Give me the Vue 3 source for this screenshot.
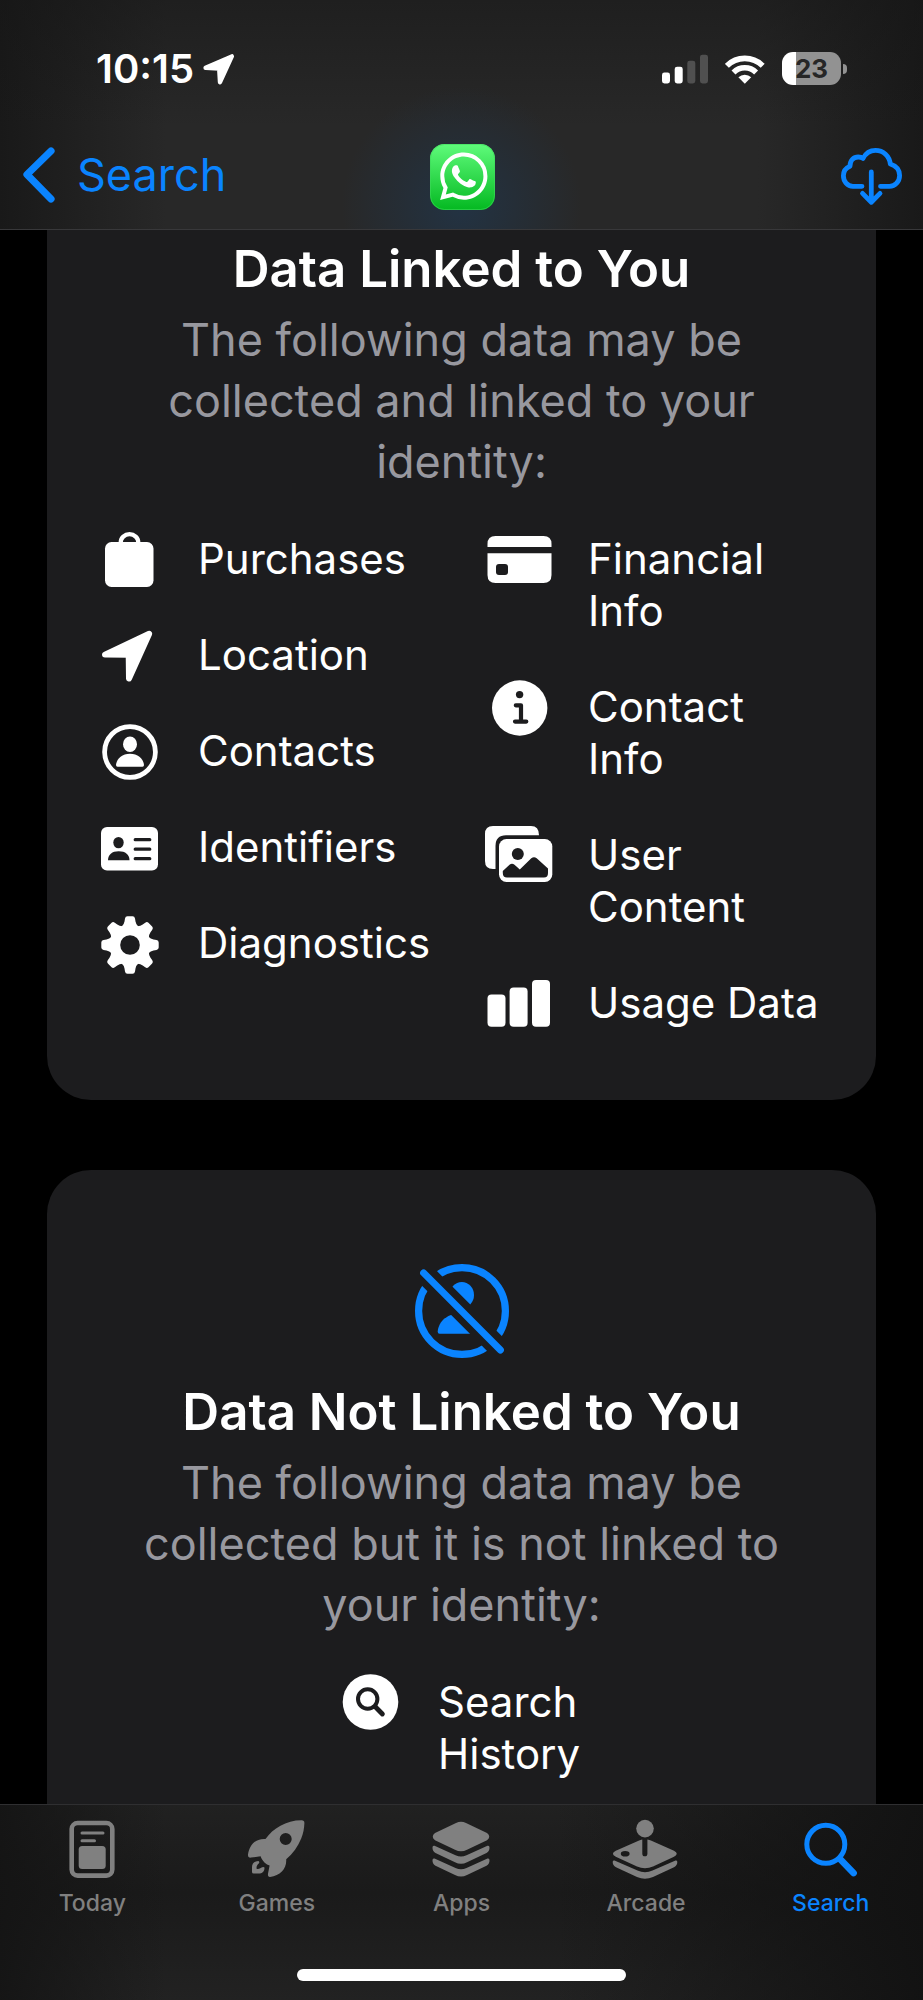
<script setup>
const linkedColumns = [
  [
    { icon: 'bag', label: 'Purchases' },
    { icon: 'location', label: 'Location' },
    { icon: 'contacts', label: 'Contacts' },
    { icon: 'id', label: 'Identifiers' },
    { icon: 'gear', label: 'Diagnostics' },
  ],
  [
    { icon: 'card', label: 'Financial Info' },
    { icon: 'info', label: 'Contact Info' },
    { icon: 'photos', label: 'User Content' },
    { icon: 'bars', label: 'Usage Data' },
  ],
]

const tabs = ['Today', 'Games', 'Apps', 'Arcade', 'Search']
const teeth = [0, 45, 90, 135, 180, 225, 270, 315]
</script>

<template>
  <div class="screen">
    <header class="top">
      <div class="status">
        <div class="clock">
          <span>10:15</span>
          <svg width="32" height="32" viewBox="0 0 32 32" aria-hidden="true">
            <path d="M2.6 14.8 28.8 3.4 17 29.2 16.2 15.6Z" fill="#fff" stroke="#fff" stroke-width="4.4" stroke-linejoin="round" />
          </svg>
        </div>
        <div class="indicators">
          <svg width="46" height="30" viewBox="0 0 46 30" aria-hidden="true">
            <rect x="0" y="18.500" width="8" height="11" rx="2.400" fill="#fff" />
            <rect x="12.700" y="12.700" width="8" height="16.800" rx="2.400" fill="#fff" />
            <rect x="25.300" y="6.700" width="8" height="22.800" rx="2.400" fill="#505050" />
            <rect x="38" y="0.700" width="8" height="28.800" rx="2.400" fill="#505050" />
          </svg>
          <svg width="40" height="30" viewBox="0 0 40 30" aria-hidden="true">
            <path d="M1.9 11.8A25.3 25.3 0 0 1 37.7 11.8M8.5 18.4A16 16 0 0 1 31.1 18.4" fill="none" stroke="#fff" stroke-width="5.600" />
            <path d="M19.8 29.7 13.4 23.3A9 9 0 0 1 26.200 23.300Z" fill="#fff" />
          </svg>
          <div class="battery"><span class="level">23</span><i class="nub"></i></div>
        </div>
      </div>
      <nav class="nav">
        <a class="back" href="#search">
          <svg width="32" height="56" viewBox="0 0 32 56" aria-hidden="true">
            <path d="M28 4 4 27.500 28 52" fill="none" stroke="#0a84ff" stroke-width="7.200" stroke-linecap="round" stroke-linejoin="round" />
          </svg>
          <span>Search</span>
        </a>
        <svg class="logo" width="65" height="66" viewBox="0 0 65 66" role="img" aria-label="WhatsApp">
          <defs>
            <linearGradient id="wa" x1="0" y1="0" x2="0" y2="1">
              <stop offset="0" stop-color="#5ffb7b" />
              <stop offset="1" stop-color="#04b921" />
            </linearGradient>
          </defs>
          <rect width="65" height="66" rx="14.500" fill="url(#wa)" />
          <rect x="0.500" y="0.500" width="64" height="65" rx="14" fill="none" stroke="#3fd95b" stroke-opacity="0.600" />
          <path fill="#fff" transform="translate(10 8.600) scale(1.980)" d="M17.472 14.382c-.297-.149-1.758-.867-2.03-.967-.273-.099-.471-.148-.67.15-.197.297-.767.966-.94 1.164-.173.199-.347.223-.644.075-.297-.15-1.255-.463-2.39-1.475-.883-.788-1.48-1.761-1.653-2.059-.173-.297-.018-.458.13-.606.134-.133.298-.347.446-.52.149-.174.198-.298.298-.497.099-.198.05-.371-.025-.52-.075-.149-.669-1.612-.916-2.207-.242-.579-.487-.5-.669-.51-.173-.008-.371-.01-.57-.01-.198 0-.52.074-.792.372-.272.297-1.04 1.016-1.04 2.479 0 1.462 1.065 2.875 1.213 3.074.149.198 2.096 3.2 5.077 4.487.709.306 1.262.489 1.694.625.712.227 1.36.195 1.871.118.571-.085 1.758-.719 2.006-1.413.248-.694.248-1.289.173-1.413-.074-.124-.272-.198-.57-.347m-5.421 7.403h-.004a9.87 9.87 0 01-5.031-1.378l-.361-.214-3.741.982.998-3.648-.235-.374a9.86 9.86 0 01-1.51-5.26c.001-5.45 4.436-9.884 9.888-9.884 2.64 0 5.122 1.03 6.988 2.898a9.825 9.825 0 012.893 6.994c-.003 5.45-4.437 9.884-9.885 9.884m8.413-18.297A11.815 11.815 0 0012.05 0C5.495 0 .16 5.335.157 11.892c0 2.096.547 4.142 1.588 5.945L.057 24l6.305-1.654a11.882 11.882 0 005.683 1.448h.005c6.554 0 11.89-5.335 11.893-11.893a11.821 11.821 0 00-3.48-8.413z" />
        </svg>
        <button class="download" type="button" aria-label="Download">
          <svg width="61" height="58" viewBox="0 0 61 58" aria-hidden="true">
            <g fill="none" stroke="#0a84ff" stroke-width="4.800" stroke-linecap="round" stroke-linejoin="round">
              <path d="M21 38.300H12C6.300 38.300 2.400 33.200 2.400 27.800 2.400 23.400 5 19.800 9 18.200 9 12.500 12.500 9 17.300 9 19.200 9 20.800 9.500 22 10.500 24.500 5.600 29 2.400 34.500 2.400 42.300 2.400 48.500 8 49.300 16 55 17.800 58.600 22 58.600 27.500 58.600 33.500 54.200 38.300 48.500 38.300H39.500" />
              <path d="M30.300 24V54M21.500 45.400 30.300 54.200 39 45.400" />
            </g>
          </svg>
        </button>
      </nav>
    </header>

    <main class="content">
      <section class="card linked">
        <h2>Data Linked to You</h2>
        <p>The following data may be collected and linked to your identity:</p>
        <div class="columns">
          <ul v-for="(column, c) in linkedColumns" :key="c">
            <li v-for="item in column" :key="item.label">
              <svg class="glyph" viewBox="0 0 68 52" aria-hidden="true">
                <g v-if="item.icon === 'bag'">
                  <rect x="9" y="9" width="48.500" height="45" rx="6.500" fill="#fff" />
                  <path d="M24.700 10.500V9.500A8.800 8.300 0 0 1 42.300 9.500V10.500" fill="none" stroke="#fff" stroke-width="4.200" />
                </g>
                <path v-else-if="item.icon === 'location'" d="M9 25.600 53.200 4.800 33 49.500 32.700 25.700Z" fill="#fff" stroke="#fff" stroke-width="6" stroke-linejoin="round" />
                <g v-else-if="item.icon === 'contacts'" fill="#fff">
                  <circle cx="34" cy="27" r="25.400" fill="none" stroke="#fff" stroke-width="4.800" />
                  <ellipse cx="34" cy="19.200" rx="7" ry="7.700" />
                  <path d="M21.500 41.700Q20 41.700 20 40C20.500 34 26 28.800 34 28.800S47.500 34 48 40Q48 41.700 46.500 41.700Z" />
                </g>
                <g v-else-if="item.icon === 'id'" fill="#1c1c1e">
                  <rect x="5" y="6" width="57" height="43.500" rx="6" fill="#fff" />
                  <ellipse cx="22.500" cy="21.600" rx="5.200" ry="5.700" />
                  <path d="M12 39.300C12 33.500 16 30.200 22.700 30.200S33.500 33.500 33.500 39.300Z" />
                  <path d="M39.200 18.700H53.800M39.200 28.200H53.800M39.200 37.700H53.800" stroke="#1c1c1e" stroke-width="3.200" stroke-linecap="round" />
                </g>
                <g v-else-if="item.icon === 'gear'" fill="#fff">
                  <circle cx="34" cy="28" r="20.500" />
                  <path v-for="angle in teeth" :key="angle" :transform="`rotate(${angle} 34 28)`" d="M25.800 9.500Q28 7.500 28.500 4.500L29 1.500Q29.400-.7 31.400-.7H36.600Q38.600-.7 39 1.500L39.500 4.500Q40 7.500 42.200 9.500Z" />
                  <circle cx="34" cy="28" r="9.800" fill="#1c1c1e" />
                </g>
                <g v-else-if="item.icon === 'card'" fill="#fff">
                  <path d="M1.500 14V11Q1.500 3 9.500 3H57.500Q65.500 3 65.500 11V14Z" />
                  <path d="M1.500 20.300H65.500V42Q65.500 50 57.500 50H9.500Q1.500 50 1.500 42Z" />
                  <rect x="10" y="31" width="12" height="11" rx="3" fill="#1c1c1e" />
                </g>
                <g v-else-if="item.icon === 'info'">
                  <circle cx="33.700" cy="27" r="27.700" fill="#fff" />
                  <circle cx="33.600" cy="13.600" r="3.700" fill="#1c1c1e" />
                  <path d="M29.800 24.300H35V40.600M29 40.600H40.300" fill="none" stroke="#1c1c1e" stroke-width="4.200" stroke-linecap="round" stroke-linejoin="round" />
                </g>
                <g v-else-if="item.icon === 'photos'" fill="#fff">
                  <path d="M9.500 40H7Q-1 40-1 32V5Q-1-3 7-3H45Q53-3 53 6.300H20Q9.500 6.300 9.500 17Z" />
                  <rect x="13" y="10" width="53.300" height="43" rx="7.500" />
                  <circle cx="31.800" cy="25" r="6" fill="#1c1c1e" />
                  <path d="M16.800 42 23.500 35.800Q26 33.800 28.500 35.800L33.800 40.600 45.300 29.300Q48 27 50.700 29.300L62 39.500V44Q62 48.600 58 48.600H21Q16.800 48.600 16.800 44Z" fill="#1c1c1e" />
                </g>
                <g v-else fill="#fff">
                  <rect x="1.500" y="17.500" width="18" height="32.200" rx="4" />
                  <rect x="23.600" y="10.600" width="18" height="39.100" rx="4" />
                  <rect x="46" y="3" width="18" height="46.700" rx="4" />
                </g>
              </svg>
              <span>{{ item.label }}</span>
            </li>
          </ul>
        </div>
      </section>

      <section class="card unlinked">
        <svg class="hero" width="94" height="94" viewBox="0 0 94 94" aria-hidden="true">
          <mask id="cut">
            <rect width="94" height="94" fill="#fff" />
            <path d="M-5-5 99 99" stroke="#000" stroke-width="21" />
          </mask>
          <g mask="url(#cut)" fill="#0a84ff">
            <circle cx="47" cy="47" r="43.400" fill="none" stroke="#0a84ff" stroke-width="7.200" />
            <ellipse cx="46.800" cy="31" rx="12.200" ry="13" />
            <path d="M24.500 69.700Q22.700 69.700 22.700 67.500C23.500 57 33 49 47 49S70.500 57 71.300 67.500Q71.300 69.700 69.500 69.700Z" />
          </g>
          <path d="M8.600 8.900 85.400 86" stroke="#0a84ff" stroke-width="7" stroke-linecap="round" />
        </svg>
        <h2>Data Not Linked to You</h2>
        <p>The following data may be collected but it is not linked to your identity:</p>
        <ul class="single">
          <li>
            <svg class="glyph" viewBox="0 0 68 52" aria-hidden="true">
              <circle cx="34.500" cy="26" r="27.800" fill="#fff" />
              <g fill="none" stroke="#1c1c1e" stroke-linecap="round">
                <circle cx="31.700" cy="23" r="9.700" stroke-width="4" />
                <path d="M39.500 31 46.400 38" stroke-width="4.800" />
              </g>
            </svg>
            <span>Search History</span>
          </li>
        </ul>
      </section>
    </main>

    <footer class="bottom">
      <nav class="tabs">
        <a v-for="tab in tabs" :key="tab" :href="`#${tab.toLowerCase()}`" :class="{ active: tab === 'Search' }">
          <svg width="68" height="60" viewBox="0 0 68 60" fill="currentColor" aria-hidden="true">
            <g v-if="tab === 'Today'">
              <rect x="13.700" y="4" width="40.600" height="52.600" rx="6" fill="none" stroke="currentColor" stroke-width="4.600" />
              <path d="M24 14H45M24 21.700H36.500" stroke="currentColor" stroke-width="3" stroke-linecap="round" />
              <rect x="20.700" y="27" width="27" height="23" rx="3.500" />
            </g>
            <g v-else-if="tab === 'Games'">
              <path fill-rule="evenodd" d="M58.500 1.300Q61.400 1.200 61.400 4C61.200 9.500 60.300 14.500 58.200 19.500 55 27.500 50 34.500 43.200 40.200 43.800 49.500 37.500 56.500 27 58 25 58 24.800 56 25 54.700L26.600 46.500C23.500 46 19 42 17.600 37.300L8 38.600C6 38.800 4.800 38 5 35.500 6.500 26 12.500 19.300 22.500 20 30 9.500 43 1.300 58.500 1.300ZM42.700 13.900A6 6 0 1 0 42.700 25.900 6 6 0 1 0 42.700 13.900Z" />
              <path d="M15.300 41.900C11 42.500 9 44.500 9 48V53Q9 54.600 10.700 54.600H15.500C19.500 54.600 21.600 52.500 21.500 48.500Q20.300 47.300 18.600 48.600 16 50.500 13.600 49.700C13.300 47.500 14 46 16 44.200Q16.800 42.500 15.300 41.900Z" />
            </g>
            <g v-else-if="tab === 'Apps'">
              <path d="M29 4Q34 1.500 39 4L60 14Q64.500 17.700 60 21.300L40 30.700Q34 33.700 28 30.700L8 21.300Q3.500 17.700 8 14Z" />
              <path d="M7.500 26.800 28.500 36.200Q34 38.800 39.500 36.200L60.500 26.800Q62.500 26.200 62.500 28.500 62.600 32.300 59.500 33.900L40 43.200Q34 46.300 28 43.200L8.500 33.900Q5.400 32.300 5.500 28.500 5.500 26.200 7.500 26.800Z" />
              <path d="M7.500 39.600 28.500 49Q34 51.600 39.500 49L60.500 39.600Q62.500 39 62.500 41.300 62.600 45.100 59.500 46.700L40 56Q34 59.100 28 56L8.500 46.700Q5.400 45.100 5.500 41.300 5.500 39 7.500 39.600Z" />
            </g>
            <g v-else-if="tab === 'Arcade'">
              <circle cx="33" cy="9.600" r="8.800" />
              <path fill-rule="evenodd" d="M30.300 20.600V34.800A2.500 2.500 0 0 0 35.400 34.800V20.600Q37.500 20.800 39.500 21.700L62 31.800Q67.500 34.500 62 37.800L41 47.500Q33 51 25 47.500L3.800 37.800Q-2 34.500 3.800 31.800L26.500 21.700Q28.500 20.800 30.300 20.600ZM13.200 31.900A4.400 2.800 0 1 0 13.200 37.500 4.400 2.800 0 1 0 13.200 31.900Z" />
              <path d="M2.500 41.600 25.500 51.600Q33 54.700 40.500 51.600L63.500 41.600Q65.300 41 65.300 43 65.300 46.500 62 48.200L41 58Q33 61.300 25 58L4 48.200Q.700 46.500 .700 43 .700 41 2.500 41.600Z" />
            </g>
            <g v-else fill="none" stroke="currentColor" stroke-linecap="round">
              <circle cx="28.800" cy="25.300" r="19" stroke-width="5" />
              <path d="M43.500 40.500 56.500 54" stroke-width="6.800" />
            </g>
          </svg>
          <span>{{ tab }}</span>
        </a>
      </nav>
      <div class="home"></div>
    </footer>
  </div>
</template>

<style>
body {
  margin: 0;
  background: #000;
}
</style>

<style scoped>
.screen {
  display: flex;
  flex-direction: column;
  min-height: 100vh;
  background: #000;
  color: #fff;
  font-family: Inter, "Liberation Sans", sans-serif;
}
.top {
  border-bottom: 1px solid #38383a;
  background:
    radial-gradient(circle 120px at 50% 90%, rgba(34, 52, 70, 0.9), rgba(34, 52, 70, 0)),
    linear-gradient(rgba(22, 22, 22, 0.5), rgba(22, 22, 22, 0) 55%),
    linear-gradient(90deg, #191919, #282828 18%, #282828 82%, #191919);
}
.status {
  display: flex;
  justify-content: space-between;
  align-items: center;
  height: 137px;
  padding: 0 76px 0 96px;
}
.clock {
  display: flex;
  align-items: center;
  gap: 9px;
  font-size: 40px;
  font-weight: 600;
}
.indicators {
  display: flex;
  align-items: center;
  gap: 17px;
}
.battery {
  display: flex;
  align-items: center;
  gap: 2px;
}
.level {
  width: 59px;
  height: 33px;
  border-radius: 11px;
  background: linear-gradient(90deg, #fff 23%, #929292 23%);
  color: #262626;
  font-size: 26px;
  font-weight: 700;
  line-height: 33px;
  text-align: center;
}
.nub {
  width: 4px;
  height: 10px;
  border-radius: 0 5px 5px 0;
  background: #929292;
}
.nav {
  display: grid;
  grid-template-columns: 1fr auto 1fr;
  align-items: center;
  height: 80px;
  padding: 0 21px 12px 23px;
}
.back {
  display: flex;
  align-items: center;
  gap: 22px;
  padding-bottom: 5px;
  color: #0a84ff;
  font-size: 45px;
  line-height: 58px;
  text-decoration: none;
}
.download {
  display: flex;
  justify-self: end;
  padding: 0;
  border: 0;
  background: none;
}
.content {
  flex: 1;
  display: flex;
  flex-direction: column;
  gap: 70px;
  padding: 0 47px;
}
.card {
  background: #1c1c1e;
  text-align: center;
}
.linked {
  padding: 9px 49px 71px;
  border-radius: 0 0 44px 44px;
}
.unlinked {
  flex: 1;
  padding: 94px 49px 0;
  border-radius: 44px 44px 0 0;
}
.hero {
  display: block;
  margin: 0 auto 24px;
}
h2 {
  margin: 0 0 10px;
  font-size: 51px;
  font-weight: 600;
  line-height: 60px;
}
p {
  margin: 0 0 41px;
  padding: 0 30px;
  color: #98989f;
  font-size: 45px;
  line-height: 61px;
}
.columns {
  display: grid;
  grid-template-columns: 1fr 1fr;
  gap: 49px;
}
ul {
  display: flex;
  flex-direction: column;
  gap: 44px;
  margin: 0;
  padding: 0;
  list-style: none;
}
li {
  display: flex;
  gap: 34px;
  font-size: 42px;
  line-height: 52px;
  text-align: left;
}
.glyph {
  flex: none;
  width: 68px;
  height: 52px;
  overflow: visible;
}
.single {
  align-items: center;
}
.single span {
  width: 149px;
}
.bottom {
  border-top: 1px solid #2f2f31;
  background:
    linear-gradient(90deg, rgba(20, 20, 20, 0.9), rgba(20, 20, 20, 0) 18%, rgba(20, 20, 20, 0) 60%, rgba(17, 17, 17, 0.9)),
    linear-gradient(#212121, #1a1a1a 45%, #222);
}
.tabs {
  display: grid;
  grid-template-columns: repeat(5, 1fr);
  padding-top: 14px;
}
.tabs a {
  display: flex;
  flex-direction: column;
  align-items: center;
  gap: 10px;
  color: #808080;
  font-size: 23px;
  font-weight: 500;
  line-height: 28px;
  text-decoration: none;
}
.tabs .active {
  color: #0a84ff;
}
.home {
  width: 329px;
  height: 12px;
  margin: 52px auto 19px;
  border-radius: 6px;
  background: #fff;
}
</style>
